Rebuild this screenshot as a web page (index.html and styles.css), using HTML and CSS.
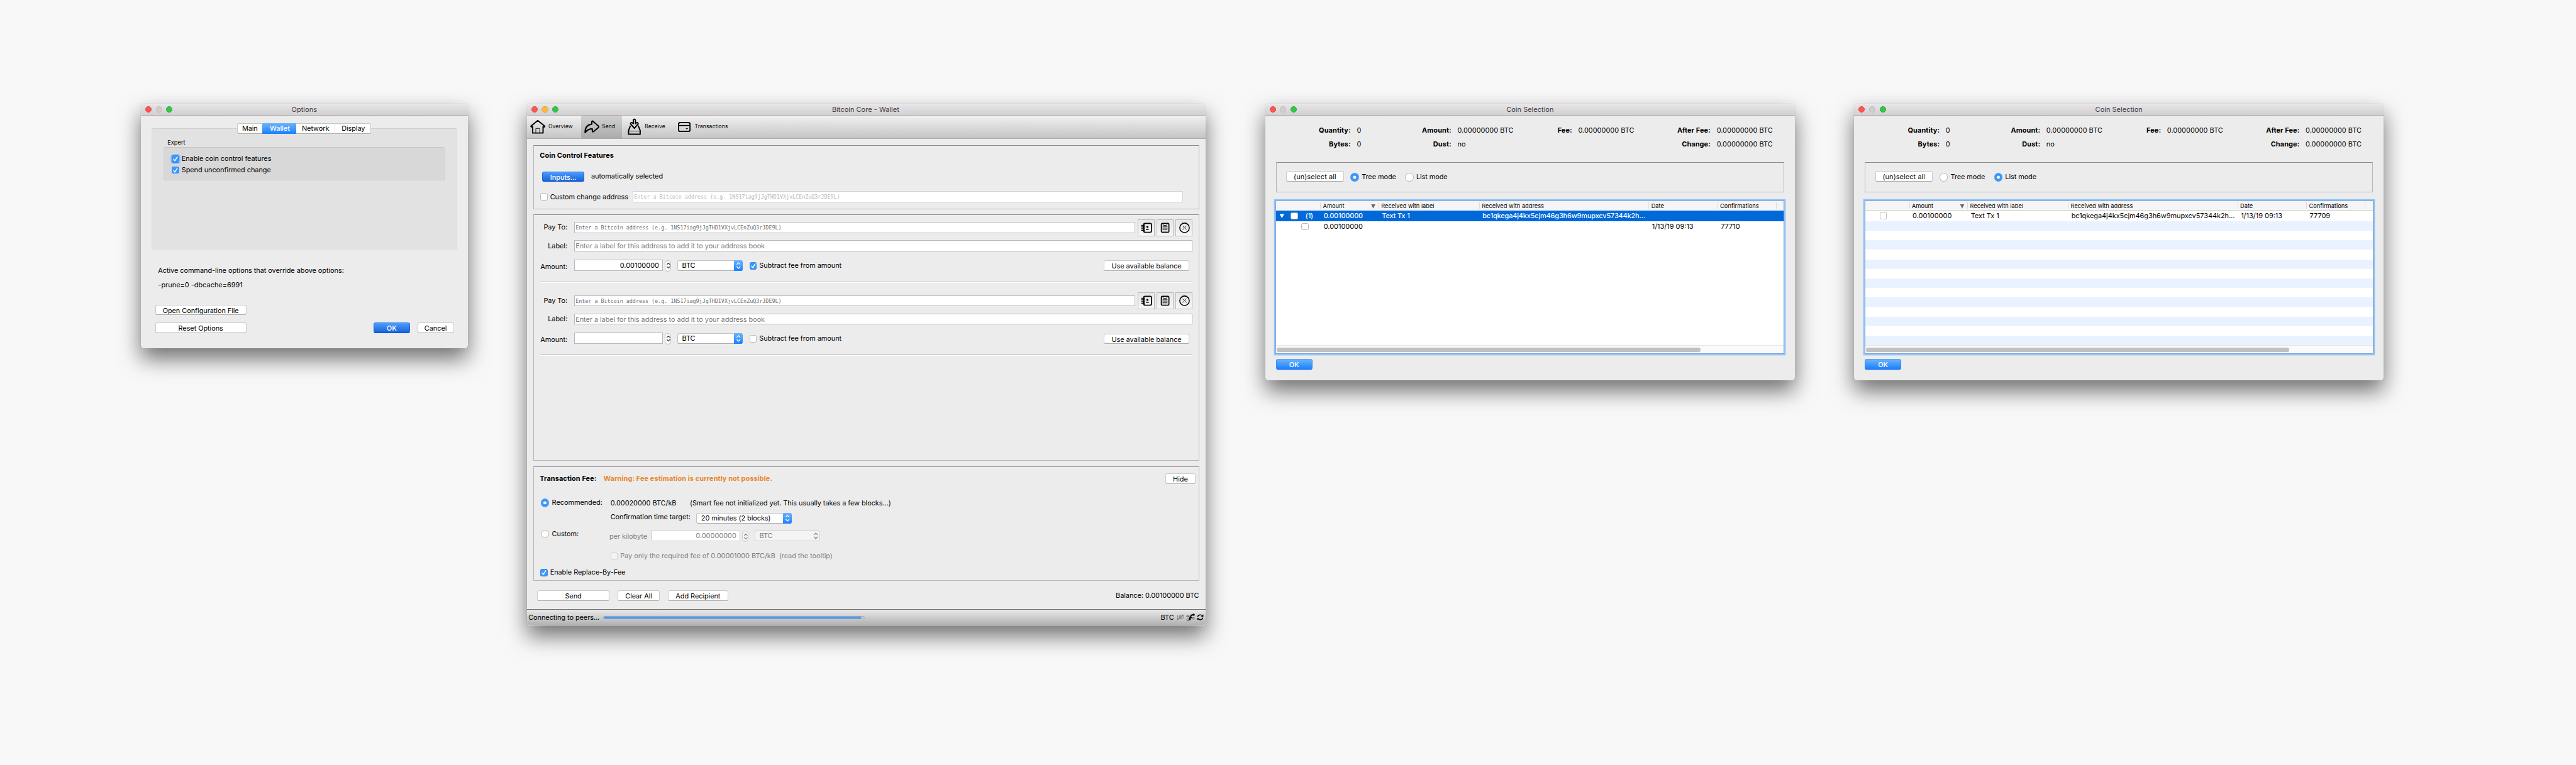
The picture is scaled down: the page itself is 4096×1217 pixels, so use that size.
FILE: index.html
```html
<!DOCTYPE html>
<html lang="en">
<head>
<meta charset="utf-8">
<title>Coin control</title>
<link rel="stylesheet" href="styles.css">
</head>
<body>
<svg class="defs" width="0" height="0">
  <symbol id="check" viewBox="0 0 14 14"><path d="M3.6 7.6 6 10.4 10.4 3.4" fill="none" stroke="#fff" stroke-width="1.7" stroke-linecap="round" stroke-linejoin="round"/></symbol>
  <symbol id="updown" viewBox="0 0 10 20"><path d="M2 7.8 5 4.6 8 7.8M2 12.2 5 15.4 8 12.2" fill="none" stroke="currentColor" stroke-width="1.5" stroke-linecap="round" stroke-linejoin="round"/></symbol>
  <symbol id="book" viewBox="0 0 96 96"><g fill="none" stroke="#000"><rect x="34" y="23" width="44" height="50" rx="7" stroke-width="6"/><path d="M39 23v50" stroke-width="3"/><path d="M22 34h14M22 43h14M22 53h14M22 62h14" stroke-width="5" stroke-linecap="round"/><path d="M49 57h12" stroke-width="5" stroke-linecap="round"/></g><circle cx="55" cy="43" r="6"/></symbol>
  <symbol id="paste" viewBox="0 0 96 96"><g fill="none" stroke="#000"><rect x="27" y="23" width="43" height="50" rx="6" stroke-width="6"/><path d="M37 23v7q0 4 4 4h14q4 0 4-4v-7" stroke-width="3.5"/><path d="M34 42h28M34 50h28M34 58h28M34 66h28" stroke-width="3"/></g></symbol>
  <symbol id="clear" viewBox="0 0 96 96"><g fill="none" stroke="#000"><circle cx="48" cy="48" r="27" stroke-width="5.5"/><path d="M37 37 59 59M59 37 37 59" stroke-width="3"/></g></symbol>
</svg>
<main class="stage">

<section class="window options">
  <header class="titlebar"><i class="dot red"></i><i class="dot off"></i><i class="dot green"></i><span>Options</span></header>
  <div class="tabpane">
    <nav class="tabs"><span class="t-main">Main</span><span class="t-wallet on">Wallet</span><span class="t-net">Network</span><span class="t-disp">Display</span></nav>
    <div class="small expert">Expert</div>
    <div class="group">
      <label class="ck"><i class="box on focus"><svg><use href="#check"/></svg></i>Enable coin control features</label>
      <label class="ck"><i class="box on"><svg><use href="#check"/></svg></i>Spend unconfirmed change</label>
    </div>
  </div>
  <p class="override">Active command-line options that override above options:</p>
  <p class="override flags">-prune=0 -dbcache=6991</p>
  <div class="row conf"><span class="btn w171">Open Configuration File</span></div>
  <div class="row acts"><span class="btn w171">Reset Options</span><span class="btn deep ok">OK</span><span class="btn cancel">Cancel</span></div>
</section>

<section class="window wallet">
  <header class="titlebar"><i class="dot red"></i><i class="dot amber"></i><i class="dot green"></i><span class="core">Bitcoin Core - Wallet</span></header>
  <nav class="toolbar">
    <span class="tool overview"><svg width="30" height="28" viewBox="0 0 90 84"><path d="M43 6 83 38 80 43 73 41V77H14V41L7 43 4 38Z" fill="none" stroke="#000" stroke-width="7" stroke-linejoin="round"/><path d="M32 77V51H54V77" fill="none" stroke="#000" stroke-width="3"/></svg>Overview</span>
    <span class="tool send"><svg width="29.3" height="25.3" viewBox="0 0 88 76"><path d="M5 71C4 42 18 26 43 23V9Q46 3 51 8L81 35Q84 39 80 43L53 65Q47 69 46 61V51C28 48 16 57 5 71Z" fill="none" stroke="#000" stroke-width="7.5" stroke-linejoin="round"/></svg>Send</span>
    <span class="tool receive"><svg width="25.3" height="32.7" viewBox="0 0 76 98"><path d="M16 42 5 70V91H71V70L60 42M32 31V10Q38 1 44 10V31Q57 18 60 32L38 57 16 32Q19 18 32 31Z" fill="none" stroke="#000" stroke-width="7" stroke-linejoin="round"/><path d="M5 73H71" stroke="#000" stroke-width="3"/></svg>Receive</span>
    <span class="tool trans"><svg width="24" height="19" viewBox="0 0 72 57"><rect x="3.5" y="3.5" width="65" height="50" rx="9" fill="none" stroke="#000" stroke-width="7"/><path d="M3 20H69" stroke="#000" stroke-width="5.5"/><path d="M45 38H56" stroke="#000" stroke-width="4"/></svg>Transactions</span>
  </nav>

  <div class="frame coin">
    <div class="row r-head bold">Coin Control Features</div>
    <div class="row r-inputs"><span class="btn deep inputs">Inputs...</span>automatically selected</div>
    <div class="row r-change"><label class="ck"><i class="box"></i>Custom change address</label><span class="field mono faint">Enter a Bitcoin address (e.g. 1NS17iag9jJgTHD1VXjvLCEnZuQ3rJDE9L)</span></div>
  </div>

  <div class="frame entries">
    <div class="entry">
      <div class="row r-pay"><span class="lbl">Pay To:</span><span class="field mono">Enter a Bitcoin address (e.g. 1NS17iag9jJgTHD1VXjvLCEnZuQ3rJDE9L)</span><span class="ib"><svg><use href="#book"/></svg></span><span class="ib"><svg><use href="#paste"/></svg></span><span class="ib"><svg><use href="#clear"/></svg></span></div>
      <div class="row r-label"><span class="lbl">Label:</span><span class="field">Enter a label for this address to add it to your address book</span></div>
      <div class="row r-amt"><span class="lbl">Amount:</span><span class="num">0.00100000</span><span class="step"><svg><use href="#updown"/></svg></span><span class="combo"><b>BTC</b><i><svg><use href="#updown"/></svg></i></span><label class="ck"><i class="box on"><svg><use href="#check"/></svg></i>Subtract fee from amount</label><span class="btn use">Use available balance</span></div>
      <hr>
    </div>
    <div class="entry">
      <div class="row r-pay"><span class="lbl">Pay To:</span><span class="field mono">Enter a Bitcoin address (e.g. 1NS17iag9jJgTHD1VXjvLCEnZuQ3rJDE9L)</span><span class="ib"><svg><use href="#book"/></svg></span><span class="ib"><svg><use href="#paste"/></svg></span><span class="ib"><svg><use href="#clear"/></svg></span></div>
      <div class="row r-label"><span class="lbl">Label:</span><span class="field">Enter a label for this address to add it to your address book</span></div>
      <div class="row r-amt"><span class="lbl">Amount:</span><span class="num"></span><span class="step"><svg><use href="#updown"/></svg></span><span class="combo"><b>BTC</b><i><svg><use href="#updown"/></svg></i></span><label class="ck"><i class="box"></i>Subtract fee from amount</label><span class="btn use">Use available balance</span></div>
      <hr>
    </div>
  </div>

  <div class="frame fee">
    <div class="row f-head"><span class="bold tf">Transaction Fee:</span><span class="bold warn">Warning: Fee estimation is currently not possible.</span><span class="btn hide">Hide</span></div>
    <div class="row f-rec"><label class="rd"><i class="radio on"></i>Recommended:</label><span class="rate">0.00020000 BTC/kB</span><span>(Smart fee not initialized yet. This usually takes a few blocks...)</span></div>
    <div class="row f-conf"><span class="ct">Confirmation time target:</span><span class="combo wide"><b>20 minutes (2 blocks)</b><i><svg><use href="#updown"/></svg></i></span></div>
    <div class="row f-cust"><label class="rd"><i class="radio"></i>Custom:</label><span class="pk">per kilobyte</span><span class="num dis">0.00000000</span><span class="step dis"><svg><use href="#updown"/></svg></span><span class="combo dis"><b>BTC</b><i><svg><use href="#updown"/></svg></i></span></div>
    <div class="row f-only"><label class="ck"><i class="box dis"></i>Pay only the required fee of 0.00001000 BTC/kB &nbsp;(read the tooltip)</label></div>
    <div class="row f-rbf"><label class="ck"><i class="box on"><svg><use href="#check"/></svg></i>Enable Replace-By-Fee</label></div>
  </div>

  <div class="row foot"><span class="btn b-send">Send</span><span class="btn b-clear">Clear All</span><span class="btn b-add">Add Recipient</span><span class="balance">Balance: 0.00100000 BTC</span></div>
  <footer class="row status"><span class="peers">Connecting to peers...</span><span class="bar"><i style="width:98.7%"></i></span><span class="unit">BTC</span>
    <svg class="hd" width="14" height="12" viewBox="0 0 14 12"><text x="0.3" y="9.6" font-size="10" textLength="12.8" lengthAdjust="spacingAndGlyphs" fill="#6e6e6e">HD</text><path d="M1 11 13 1" stroke="#6e6e6e" stroke-width="1.2"/></svg>
    <svg class="net" width="17" height="15" viewBox="0 0 51 45"><path d="M8 15 22 22 38 25M16 37 24 24 22 12" fill="none" stroke="#444" stroke-width="3"/><g fill="none" stroke="#444" stroke-width="3"><circle cx="8" cy="15" r="5"/><circle cx="10" cy="36" r="6"/><circle cx="42" cy="27" r="5"/></g><path d="M22 38C20 18 24 8 42 6" fill="none" stroke="#000" stroke-width="8"/><circle cx="43" cy="7" r="6"/><circle cx="26" cy="22" r="6"/></svg>
    <svg class="sync" width="13" height="12" viewBox="0 0 39 36"><path d="M5 16C7 3 24 1 31 9M34 20C32 33 15 35 8 27" fill="none" stroke="#000" stroke-width="5"/><path d="M37 1V14H24ZM2 35V22H15Z"/></svg>
  </footer>
</section>

<section class="window coins tree">
  <header class="titlebar"><i class="dot red"></i><i class="dot off"></i><i class="dot green"></i><span>Coin Selection</span></header>
  <div class="totals"><b>Quantity:</b><span>0</span><b>Amount:</b><span>0.00000000 BTC</span><b>Fee:</b><span>0.00000000 BTC</span><b>After Fee:</b><span>0.00000000 BTC</span><b>Bytes:</b><span>0</span><b>Dust:</b><span>no</span><b></b><span></span><b>Change:</b><span>0.00000000 BTC</span></div>
  <div class="frame mode row"><span class="btn unsel">(un)select all</span><label class="rd m1"><i class="radio on"></i>Tree mode</label><label class="rd"><i class="radio"></i>List mode</label></div>
  <div class="table">
    <div class="tr th small"><span></span><span>Amount<i class="sort"></i></span><span>Received with label</span><span>Received with address</span><span>Date</span><span>Confirmations</span><span></span></div>
    <div class="tr sel"><span class="c0"><i class="tri"></i><i class="box"></i><em>(1)</em></span><span>0.00100000</span><span>Text Tx 1</span><span class="addr">bc1qkega4j4kx5cjm46g3h6w9mupxcv57344k2h...</span><span></span><span></span><span></span></div>
    <div class="tr"><span class="c0 child"><i class="box"></i></span><span>0.00100000</span><span></span><span></span><span>1/13/19 09:13</span><span>77710</span><span></span></div>
    <div class="rest"></div>
    <div class="scroll"><i></i></div>
  </div>
  <div class="row coinok"><span class="btn bright">OK</span></div>
</section>

<section class="window coins list">
  <header class="titlebar"><i class="dot red"></i><i class="dot off"></i><i class="dot green"></i><span>Coin Selection</span></header>
  <div class="totals"><b>Quantity:</b><span>0</span><b>Amount:</b><span>0.00000000 BTC</span><b>Fee:</b><span>0.00000000 BTC</span><b>After Fee:</b><span>0.00000000 BTC</span><b>Bytes:</b><span>0</span><b>Dust:</b><span>no</span><b></b><span></span><b>Change:</b><span>0.00000000 BTC</span></div>
  <div class="frame mode row"><span class="btn unsel">(un)select all</span><label class="rd m1"><i class="radio"></i>Tree mode</label><label class="rd"><i class="radio on"></i>List mode</label></div>
  <div class="table">
    <div class="tr th small line"><span></span><span>Amount<i class="sort"></i></span><span>Received with label</span><span>Received with address</span><span>Date</span><span>Confirmations</span><span></span></div>
    <div class="tr"><span class="c0 flat"><i class="box"></i></span><span>0.00100000</span><span>Text Tx 1</span><span class="addr">bc1qkega4j4kx5cjm46g3h6w9mupxcv57344k2h...</span><span>1/13/19 09:13</span><span>77709</span><span></span></div>
    <div class="rest stripes"></div>
    <div class="scroll"><i></i></div>
  </div>
  <div class="row coinok"><span class="btn bright">OK</span></div>
</section>

</main>
</body>
</html>
```
FILE: styles.css
```css
* { box-sizing: border-box; margin: 0; padding: 0; }
html { background: #f8f8f8; }
i, em { font-style: normal; display: block; }
svg { display: block; flex: none; }
.defs { position: absolute; }
.stage {
  zoom: 0.8421053;
  display: flex; align-items: flex-start; gap: 112px; padding: 196px 0 0 266px;
  height: 1445px;
  font: 13px/16px Inter, "Liberation Sans", sans-serif;
  letter-spacing: -0.08px;
  color: #000; white-space: nowrap;
}
.row { display: flex; align-items: center; }
.bold { font-weight: 700; letter-spacing: 0.1px; }
.small { font-size: 11px; letter-spacing: 0; }

/* window chrome */
.window {
  flex: none; display: flex; flex-direction: column; overflow: visible;
  background: #ececec; border-radius: 5px;
  box-shadow: 0 0 1px rgba(0,0,0,.45), 0 20px 40px rgba(0,0,0,.55);
}
.options { width: 617px; height: 462px; }
.wallet { width: 1282px; height: 985px; }
.coins { width: 1000px; height: 522px; }
.titlebar {
  flex: none; height: 22px; display: flex; align-items: center; gap: 8px; padding-left: 8px;
  background: linear-gradient(#e9e6ea, #d2cfd2); border-bottom: 1px solid #b0adb0;
  border-radius: 5px 5px 0 0; box-shadow: inset 0 1px 0 #f6f5f6; color: #3e3c3e;
}
.titlebar span { flex: 1; text-align: center; padding: 2.5px 68px 0 0; letter-spacing: 0.05px; }
.titlebar .core { padding-right: 71px; }
.dot { width: 12px; height: 12px; border-radius: 50%; flex: none; }
.red { background: #fc5753; border: 1px solid #df4744; }
.amber { background: #fdbc40; border: 1px solid #de9f34; }
.green { background: #33c748; border: 1px solid #27aa35; }
.off { background: #d0cfd0; border: 1px solid #bcbabc; }

/* controls */
.btn {
  flex: none; height: 20px; line-height: 19px; text-align: center; border-radius: 4px;
  background: #fff; border: 1px solid #cbcbcb; border-bottom-color: #adadad;
}
.deep { background: linear-gradient(#4e9bfb, #1565dc); border-color: #2d7cec #1a66dc #0f4fc0; color: #fff; font-weight: 500; }
.bright { background: linear-gradient(#6cb3fa, #1a80fe); border-color: #4fa1f8 #2f8bfb #0a66f4; color: #fff; font-weight: 500; }
.ck, .rd { display: flex; align-items: center; flex: none; }
.box { width: 14px; height: 14px; flex: none; border-radius: 3px; background: #fff; border: 1px solid #b9b9b9; margin-right: 4.5px; }
.box.on { background: #3d98fb; border-color: #2f8af5; }
.box.on svg { width: 14px; height: 14px; margin: -1px; }
.box.focus { box-shadow: 0 0 0 2px #8dbcf0; }
.box.dis { background: #f4f4f4; border-color: #cfcfcf; }
.radio { width: 16px; height: 16px; flex: none; border-radius: 50%; background: #fff; border: 1px solid #b4b4b4; margin-right: 5px; }
.radio.on { background: radial-gradient(circle, #fff 0 2.6px, #3d98fb 3.2px); border-color: #3d98fb; }
.field { height: 21px; line-height: 19px; background: #fff; border: 1px solid #b9b9b9; padding-left: 2px; color: #7c7c7c; overflow: hidden; }
.mono { font-family: "DejaVu Sans Mono", monospace; font-size: 10px; letter-spacing: -0.03px; color: #707070; }
.faint { border-color: #d2d2d2; color: #b8b8b8; }
.num { width: 168px; height: 21.5px; line-height: 20px; background: #fff; border: 1px solid #b9b9b9; text-align: right; padding-right: 6px; letter-spacing: 0; margin-bottom: 2px; flex: none; }
.num.dis { color: #808080; border-color: #c8c8c8; margin: 0; }
.step { width: 12px; height: 21px; flex: none; border-radius: 6px; background: #fff; border: 1px solid #b9b9b9; color: #404040; display: flex; align-items: center; justify-content: center; margin-left: 4px; }
.step svg { width: 9px; height: 18px; }
.step.dis { background: #f4f4f4; border-color: #cdcdcd; color: #808080; margin-top: 2px; }
.combo { width: 124px; height: 20.5px; flex: none; display: flex; border-radius: 4px; background: #fff; border: 1px solid #c4c4c4; border-bottom-color: #adadad; margin-left: 11px; }
.combo b { font-weight: 400; flex: 1; padding-left: 8px; line-height: 18px; }
.combo i { width: 17px; margin: -1px -1px -1px 0; border-radius: 0 4px 4px 0; background: linear-gradient(#6cb3fa, #1a80fe); color: #fff; display: flex; align-items: center; justify-content: center; }
.combo i svg { width: 10px; height: 20px; }
.combo.wide { width: 181px; margin: 0; }
.combo.dis { background: #f4f4f4; border-color: #cdcdcd; color: #808080; }
.combo.dis i { background: none; color: #808080; }
.frame { flex: none; border: 1px solid #b6b6b6; border-top-color: #8c8c8c; }

/* options */
.tabpane { flex: none; height: 230px; margin: 24px 20px 0; padding: 0 23px; background: #e2e2e2; border: 1px solid #dcdcdc; border-top-color: #d0d0d0; border-radius: 4px; }
.tabs { display: flex; width: 253px; height: 20.5px; margin: -11px 0 0 137px; background: #fff; border: 1px solid #c6c6c6; border-bottom-color: #adadad; border-radius: 4px; line-height: 18.5px; text-align: center; }
.t-main { width: 47px; }
.t-wallet { width: 64px; margin: -1px 0; line-height: 20.5px; padding-left: 2px; color: #fff; font-weight: 500; background: linear-gradient(#6cb3fa, #1a80fe); }
.t-net { width: 74px; border-right: 1px solid #dedede; }
.t-disp { flex: 1; padding-left: 2px; }
.expert { padding-left: 6px; margin-top: 9px; }
.group { height: 63.5px; margin-left: -1px; margin-right: -1px; padding: 11px 0 0 14px; background: #d8d8d8; border: 1px solid #d0d0d0; border-top-color: #c6c6c6; border-radius: 4px; }
.group .ck { height: 21px; }
.override { padding-left: 32.5px; margin-top: 31px; }
.flags { margin-top: 12px; letter-spacing: 0; }
.conf { margin: 28.5px 0 0 27px; }
.acts { margin: 14px 0 0 27px; }
.w171 { width: 172px; }
.ok { width: 69px; margin-left: 240px; }
.cancel { width: 69px; margin-left: 14px; }

/* wallet toolbar */
.toolbar { flex: none; height: 44px; display: flex; background: linear-gradient(#fff 0 1px, #efefef 1px, #c5c5c5); border-bottom: 1px solid #aaa; font-size: 10px; letter-spacing: 0.2px; }
.tool { display: flex; align-items: center; }
.overview { width: 102px; padding-left: 6.5px; gap: 4px; }
.send { width: 77px; margin-top: 1px; padding-left: 5.7px; gap: 4.7px; background: linear-gradient(#d0d0d0, #ababab); border-radius: 3px 3px 0 0; }
.receive { width: 106px; padding-left: 11.5px; gap: 6.7px; }
.trans { gap: 7.7px; padding-top: 1px; }

.coin { margin: 12px 12px 0; height: 121px; }
.r-head { height: 38px; padding-left: 11px; }
.r-inputs { height: 41px; padding-left: 16px; gap: 13px; }
.inputs { width: 79px; }
.r-change { height: 35px; padding-left: 12px; }
.r-change .ck { width: 174px; padding-top: 1px; }
.r-change .field { width: 1039px; }
.entries { margin: 10px 12px 0; height: 466px; }
.entry { height: 138px; padding: 0 12px 0 0; }
.lbl { width: 63px; text-align: right; margin-right: 12.5px; flex: none; }
.entry .field { flex: 1; }
.r-pay { height: 48px; }
.ib { width: 32px; height: 32px; flex: none; margin-left: 4px; border: 1px solid #b9b9b9; background: linear-gradient(#e6e6e6, #f6f6f6); }
.ib svg { width: 32px; height: 32px; margin: -1px; }
.r-label { height: 21px; }
.r-amt { height: 54px; }
.r-amt .lbl { padding-top: 5px; }
.r-amt .combo { margin-bottom: 1px; }
.r-amt .ck { margin-left: 12.5px; }
.use { width: 161px; margin-left: auto; margin-right: 6.5px; }
hr { border: 0; height: 2px; margin: 3px 0 0 12px; background: linear-gradient(#b6b6b6 50%, #fff 50%); }

.fee { margin: 10px 12px 0; height: 216px; }
.f-head { height: 44px; padding: 0 6.5px 0 11px; }
.tf { padding-top: 2px; width: 120.5px; }
.warn { color: #e8872d; }
.hide { width: 57px; margin-left: auto; }
.f-rec { height: 26px; margin-top: 12px; }
.rd { padding-bottom: 2px; }
.fee .rd { padding-left: 13px; width: 144.5px; }
.rate { width: 150px; }
.f-conf { height: 30px; padding-left: 144.5px; }
.ct { width: 162px; padding-bottom: 3px; }
.f-cust { height: 36px; color: #808080; }
.f-cust .rd { color: #000; width: 142.5px; padding-bottom: 6px; }
.pk { width: 79px; padding-top: 3px; }
.f-only { height: 40px; padding: 1px 0 0 144.5px; color: #808080; }
.f-rbf { height: 22px; padding: 1px 0 0 12px; }

.foot { flex: none; height: 54px; padding: 3px 13px 0 19px; gap: 15px; }
.b-send { width: 137px; }
.b-clear { width: 80px; }
.b-add { width: 114px; }
.balance { margin-left: auto; }
.status { flex: none; height: 30px; padding: 0 4.5px 0 2.7px; background: linear-gradient(#e9e9e9, #b2b2b2); border-top: 1px solid #707070; border-radius: 0 0 5px 5px; }
.peers { width: 141.5px; }
.bar { width: 494px; height: 6.5px; border-radius: 3.5px; background: #c8c8c8; border: 1px solid #a8a8a8; overflow: hidden; }
.bar i { height: 100%; background: #3f9bff; }
.unit { margin-left: auto; margin-right: 5px; }
.hd { margin-right: 4px; }
.net { margin-right: 3px; }

/* coin selection */
.totals { flex: none; display: grid; grid-template-columns: 161.5px 110px 80px 148px 80px 150px 111.5px 1fr; grid-auto-rows: 26px; margin-top: 16px; line-height: 26px; letter-spacing: 0; }
.totals b { text-align: right; letter-spacing: 0.1px; }
.totals span { padding-left: 11.5px; }
.mode { margin: 20px 20px 0; height: 58px; padding-left: 18.5px; }
.unsel { width: 108.5px; margin-bottom: 3px; margin-right: 13px; letter-spacing: 0.1px; }
.mode .rd { padding: 0; letter-spacing: -0.1px; }
.m1 { width: 103px; }
.table { flex: none; height: 286.5px; margin: 16.5px 21px 0; background: #fff; box-shadow: 0 0 0 1px #6f9fd6, 0 0 0 4px #96c3f5; }
.tr { display: grid; grid-template-columns: 83px 110px 190px 320px 130px 110px 15px; height: 20px; line-height: 20.5px; letter-spacing: 0; }
.tr > span { padding-left: 6.3px; }
.th { height: 17px; line-height: 18px; background: #f5f5f5; }
.th.line { border-bottom: 1px solid #cbcbcb; }
.th > span { padding-left: 5px; display: flex; justify-content: space-between; background: linear-gradient(#d6d6d6, #d6d6d6) 0 2px / 1px 12px no-repeat; }
.th > span:first-child { background: none; }
.sort { margin: 5.5px 6px 0 0; width: 8px; height: 8px; background: #6a6a6a; clip-path: polygon(0 0, 100% 0, 50% 100%); }
.sel { background: #0069d9; color: #fff; height: 20.5px; line-height: 21px; font-weight: 500; letter-spacing: -0.16px; }
.addr { letter-spacing: -0.05px; }
.sel .addr { letter-spacing: -0.2px; }
.tr > .c0 { display: flex; align-items: center; padding-left: 6px; }
.tr > .flat { padding-left: 27px; }
.tr > .child { padding-left: 47px; }
.tri { width: 9px; height: 8px; margin-right: 12px; background: #fff; clip-path: polygon(0 0, 100% 0, 50% 100%); }
.c0 em { margin-left: 9.5px; }
.list .rest { height: 235px; }
.stripes { background: repeating-linear-gradient(#ebf2ff 0 18px, #fff 18px 36px); }
.scroll { height: 14.5px; padding: 3.5px 1px 0; background: #fafafa; border-top: 1px solid #e6e6e6; }
.tree .rest { height: 214.5px; }
.scroll i { width: 800px; height: 8px; border-radius: 4px; background: #c1c1c1; }
.coinok { margin: 11.5px 0 0 20px; }
.coinok .btn { width: 69px; }
```
